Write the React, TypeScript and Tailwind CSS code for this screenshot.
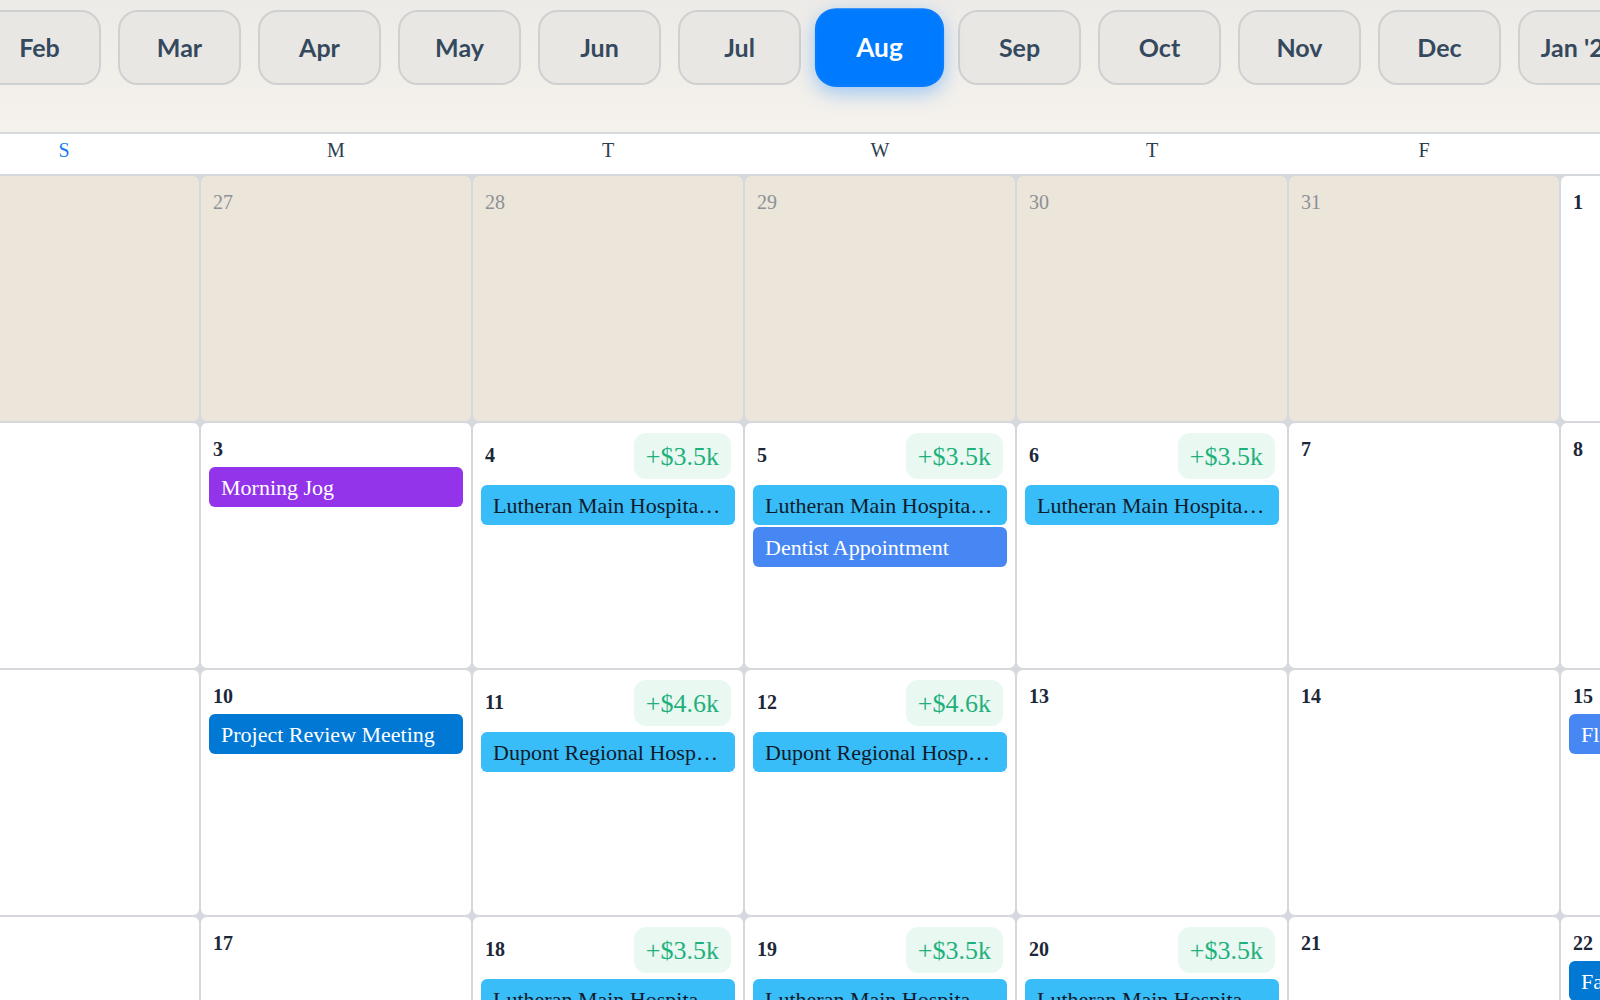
import React from 'react'

type Tone = 'shift' | 'purple' | 'blue' | 'navy'

interface CalEvent {
  title: string
  tone: Tone
}

interface DayCell {
  day: number
  muted?: boolean
  badge?: string
  events?: CalEvent[]
}

const months = ['Feb', 'Mar', 'Apr', 'May', 'Jun', 'Jul', 'Aug', 'Sep', 'Oct', 'Nov', 'Dec', "Jan '27"]
const activeMonth = 'Aug'

const weekdays = ['S', 'M', 'T', 'W', 'T', 'F', 'S']

const toneClass: Record<Tone, string> = {
  shift: 'bg-[#38bdf8] text-[#0f1b2b]',
  purple: 'bg-[#9333ea] text-white',
  blue: 'bg-[#4787f3] text-white',
  navy: 'bg-[#0078d4] text-white',
}

const lutheran: CalEvent = { title: 'Lutheran Main Hospital Shift', tone: 'shift' }
const dupont: CalEvent = { title: 'Dupont Regional Hospital Shift', tone: 'shift' }

const weeks: DayCell[][] = [
  [
    { day: 26, muted: true },
    { day: 27, muted: true },
    { day: 28, muted: true },
    { day: 29, muted: true },
    { day: 30, muted: true },
    { day: 31, muted: true },
    { day: 1 },
  ],
  [
    { day: 2 },
    { day: 3, events: [{ title: 'Morning Jog', tone: 'purple' }] },
    { day: 4, badge: '+$3.5k', events: [lutheran] },
    { day: 5, badge: '+$3.5k', events: [lutheran, { title: 'Dentist Appointment', tone: 'blue' }] },
    { day: 6, badge: '+$3.5k', events: [lutheran] },
    { day: 7 },
    { day: 8 },
  ],
  [
    { day: 9 },
    { day: 10, events: [{ title: 'Project Review Meeting', tone: 'navy' }] },
    { day: 11, badge: '+$4.6k', events: [dupont] },
    { day: 12, badge: '+$4.6k', events: [dupont] },
    { day: 13 },
    { day: 14 },
    { day: 15, events: [{ title: 'Flight to Denver', tone: 'blue' }] },
  ],
  [
    { day: 16 },
    { day: 17 },
    { day: 18, badge: '+$3.5k', events: [lutheran] },
    { day: 19, badge: '+$3.5k', events: [lutheran] },
    { day: 20, badge: '+$3.5k', events: [lutheran] },
    { day: 21 },
    { day: 22, events: [{ title: 'Family Dinner', tone: 'navy' }] },
  ],
]

const serif = { fontFamily: '"Liberation Serif", "DejaVu Serif", serif' }

function MonthStrip() {
  return (
    <div className="h-[134px] overflow-hidden border-b-2 border-[#d6d9dd] bg-gradient-to-b from-[#edebe8] to-[#f5f2ec] pt-[10px]">
      <div className="-ml-[22px] flex gap-[17px]" style={{ fontFamily: 'Lato, "Open Sans", sans-serif' }}>
        {months.map((m) =>
          m === activeMonth ? (
            <button
              key={m}
              type="button"
              className="flex h-[75px] w-[123px] shrink-0 scale-105 items-center justify-center rounded-[20px] border-2 border-[#0a7dff] bg-[#007bff] text-[25px] font-bold text-white shadow-[0_6px_18px_rgba(0,123,255,0.35)]"
            >
              {m}
            </button>
          ) : (
            <button
              key={m}
              type="button"
              className="flex h-[75px] w-[123px] shrink-0 items-center justify-center whitespace-nowrap rounded-[20px] border-2 border-[#cfd0d0] bg-[#e9e7e3] text-[25px] font-bold text-[#35495e]"
            >
              {m}
            </button>
          ),
        )}
      </div>
    </div>
  )
}

function Cell({ cell }: { cell: DayCell }) {
  return (
    <div className={`h-[245px] rounded-md p-2 ${cell.muted ? 'bg-[#ebe5da]' : 'bg-white'}`}>
      <div className="flex min-h-[36px] items-center justify-between px-1">
        <span
          className={`text-[20px] ${cell.muted ? 'font-normal text-[#8c9196]' : 'font-semibold text-[#1c2838]'}`}
        >
          {cell.day}
        </span>
        {cell.badge && (
          <span className="mt-0.5 flex h-[46px] items-center rounded-xl bg-[#eaf8f2] px-3 text-[26px] text-[#1fb17c]">
            {cell.badge}
          </span>
        )}
      </div>
      {cell.events && (
        <div className={`flex flex-col gap-[2px] ${cell.badge ? 'mt-1.5' : 'mt-0'}`}>
          {cell.events.map((e) => (
            <div
              key={e.title}
              className={`flex h-10 items-center rounded-md px-3 text-[22px] ${toneClass[e.tone]}`}
            >
              <span className="truncate">{e.title}</span>
            </div>
          ))}
        </div>
      )}
    </div>
  )
}

export default function App() {
  return (
    <div className="h-screen w-full overflow-hidden bg-white">
      <MonthStrip />

      <div className="overflow-hidden" style={serif}>
        <div className="-ml-[71px] w-[1902px]">
          {/* Weekday labels */}
          <div className="grid h-10 grid-cols-7 gap-[2px] bg-white">
            {weekdays.map((d, i) => (
              <div
                key={i}
                className={`flex items-center justify-center pb-2 text-[20px] ${i === 0 ? 'text-[#1a7cf0]' : 'text-[#2c3e50]'}`}
              >
                {d}
              </div>
            ))}
          </div>

          {/* Month grid */}
          <div className="grid grid-cols-7 gap-[2px] bg-[#d5d8dc] pt-[2px]">
            {weeks.flat().map((cell, i) => (
              <Cell key={i} cell={cell} />
            ))}
          </div>
        </div>
      </div>
    </div>
  )
}
